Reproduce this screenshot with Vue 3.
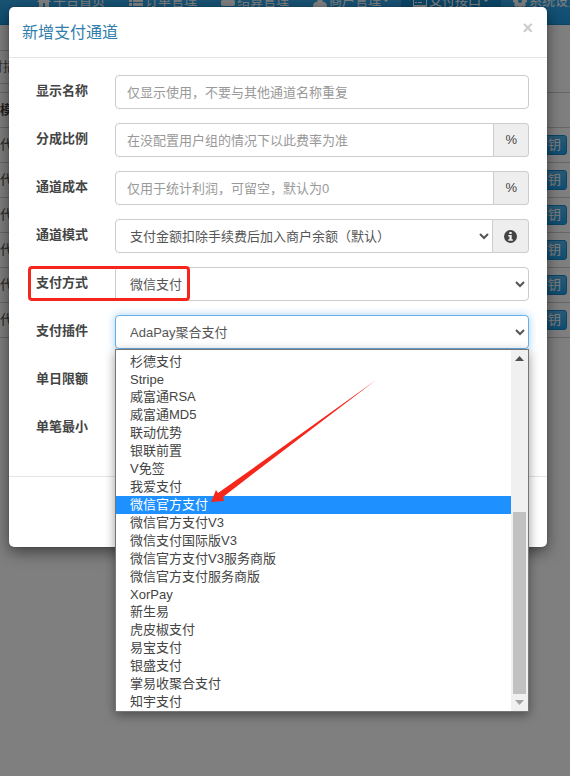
<script setup>
import { reactive } from 'vue';

const form = reactive({
  name: '',
  rate: '',
  cost: '',
  mode: '支付金额扣除手续费后加入商户余额（默认）',
  type: '微信支付',
  plugin: 'AdaPay聚合支付',
})

const active = '微信官方支付'

const plugins = [
  '刷',
  '杉德支付',
  'Stripe',
  '威富通RSA',
  '威富通MD5',
  '联动优势',
  '银联前置',
  'V免签',
  '我爱支付',
  '微信官方支付',
  '微信官方支付V3',
  '微信支付国际版V3',
  '微信官方支付V3服务商版',
  '微信官方支付服务商版',
  'XorPay',
  '新生易',
  '虎皮椒支付',
  '易宝支付',
  '银盛支付',
  '掌易收聚合支付',
  '知宇支付',
]

const isLatin = (text) => /^[a-z]+$/i.test(text)

const nav = [
  { text: '平台首页', icon: 'M7 1L0 8h2v5h4V9h2v4h4V8h2l-2-2V2h-2v2z' },
  { text: '订单管理', icon: 'M0 1h3v3H0zM4 1h10v3H4zM0 5h3v3H0zM4 5h10v3H4zM0 9h3v3H0zM4 9h10v3H4z' },
  { text: '结算管理', icon: 'M3 12a3 3 0 0 1-1-6a4 4 0 0 1 7-3a3 3 0 0 1 3 3a3 3 0 0 1-1 6z' },
  { text: '商户管理', icon: 'M7 0a4 4 0 0 1 2 7l4 2q1 1 1 4H0q0-3 1-4l4-2a4 4 0 0 1 2-7z', caret: true },
  { text: '支付接口', icon: 'M0 1h14v12H0zM1 5v6h12V5zM2 8h2v1H2zM5 8h4v1H5z', caret: true, active: true },
  { text: '系统设置', icon: 'M6 0h2l1 2 2-1 2 2-1 2 2 1v2l-2 1 1 2-2 2-2-1-1 2H6l-1-2-2 1-2-2 1-2-2-1V6l2-1-1-2 2-2 2 1zM7 5a2 2 0 1 0 0 4a2 2 0 0 0 0-4z', caret: true },
]
</script>

<template>
  <div class="page">
    <nav class="navbar">
      <a v-for="item in nav" :key="item.text" href="#" :class="{ active: item.active }">
        <svg width="14" height="13" viewBox="0 0 14 13"><path :d="item.icon" fill="currentColor" fill-rule="evenodd" /></svg>
        <span>{{ item.text }}</span>
        <i v-if="item.caret" class="caret"></i>
      </a>
    </nav>
    <div class="search">付插</div>
    <table class="list">
      <thead>
        <tr><th>模</th><th></th></tr>
      </thead>
      <tbody>
        <tr v-for="n in 6" :key="n">
          <td>代</td>
          <td class="ops"><button type="button">密钥</button></td>
        </tr>
      </tbody>
    </table>

    <div class="backdrop">
      <div class="modal" role="dialog" aria-labelledby="title">
        <div class="modal-header">
          <h4 id="title">新增支付通道</h4>
          <button type="button" class="close" aria-label="关闭">×</button>
        </div>

        <form class="modal-body">
          <div class="row">
            <label for="name">显示名称</label>
            <div class="group">
              <input id="name" v-model="form.name" type="text" placeholder="仅显示使用，不要与其他通道名称重复">
            </div>
          </div>
          <div class="row">
            <label for="rate">分成比例</label>
            <div class="group">
              <input id="rate" v-model="form.rate" type="text" placeholder="在没配置用户组的情况下以此费率为准">
              <span class="addon">%</span>
            </div>
          </div>
          <div class="row">
            <label for="cost">通道成本</label>
            <div class="group">
              <input id="cost" v-model="form.cost" type="text" placeholder="仅用于统计利润，可留空，默认为0">
              <span class="addon">%</span>
            </div>
          </div>
          <div class="row">
            <label for="mode">通道模式</label>
            <div class="group">
              <select id="mode" v-model="form.mode">
                <option>{{ form.mode }}</option>
              </select>
              <span class="addon">
                <svg width="13" height="13" viewBox="0 0 13 13">
                  <circle cx="6.5" cy="6.5" r="6.5" fill="#444" />
                  <path d="M5.300 2h2.400v2H5.300zM4.300 5h3.400v4.200h1.100v1.600H4.300V9.200h1.100V6.600H4.300z" fill="#eee" />
                </svg>
              </span>
            </div>
          </div>
          <div class="row">
            <label for="type">支付方式</label>
            <div class="group">
              <select id="type" v-model="form.type">
                <option>微信支付</option>
              </select>
            </div>
            <div class="mark"></div>
          </div>
          <div class="row">
            <label for="plugin">支付插件</label>
            <div class="group">
              <select id="plugin" v-model="form.plugin" class="focus">
                <option>AdaPay聚合支付</option>
              </select>
              <div class="menu">
                <ul role="listbox">
                  <li
                    v-for="item in plugins"
                    :key="item"
                    role="option"
                    :class="{ selected: item === active, latin: isLatin(item) }"
                  >{{ item }}</li>
                </ul>
                <div class="scrollbar">
                  <svg width="9" height="5" viewBox="0 0 9 5"><path d="M4.500 0L9 5H0z" fill="#505050" /></svg>
                  <div class="track"><div class="thumb"></div></div>
                  <svg width="9" height="5" viewBox="0 0 9 5"><path d="M4.500 5L9 0H0z" fill="#a3a3a3" /></svg>
                </div>
                <svg class="arrow" width="168" height="126" viewBox="0 0 168 126">
                  <path d="M1 122L6 110L8 113L42 89L166 0L48 90L13 117L14 121Z" fill="#f5271c" />
                </svg>
              </div>
            </div>
          </div>
          <div class="row">
            <label for="daymax">单日限额</label>
            <div class="group"><input id="daymax" type="text"></div>
          </div>
          <div class="row">
            <label for="paymin">单笔最小</label>
            <div class="group"><input id="paymin" type="text"></div>
          </div>
        </form>

        <div class="modal-footer"></div>
      </div>
    </div>
  </div>
</template>

<style>
body {
  margin: 0;
  background: #fff;
}
</style>

<style scoped>
* {
  box-sizing: border-box;
}

.page {
  position: relative;
  min-height: 100vh;
  overflow: hidden;
  font-family: "Liberation Sans", "Noto Sans CJK SC", sans-serif;
  font-size: 13px;
  line-height: 18px;
  color: #444;
}

button,
input,
select {
  font: inherit;
  color: inherit;
}

.navbar {
  display: flex;
  height: 50px;
  margin-top: -25px;
  padding-left: 25px;
  background: linear-gradient(#54b4eb, #2fa4e7 60%, #1d9ce5);
  border-bottom: 1px solid #178acc;
}

.navbar a {
  display: flex;
  flex: none;
  align-items: center;
  gap: 2px;
  padding: 2px 12px 0;
  color: #fff;
  text-decoration: none;
}

.navbar a.active {
  background: #178acc;
}

.caret {
  border: 3px solid transparent;
  border-top-color: #fff;
  border-bottom: 0;
}

.search {
  display: flex;
  justify-content: flex-end;
  width: 16px;
  height: 34px;
  margin-top: 25px;
  padding-top: 7px;
  white-space: nowrap;
  border-top: 1px solid #ccc;
  border-bottom: 1px solid #ccc;
  color: #666;
}

.list {
  width: 100%;
  margin-top: 8px;
  border-collapse: collapse;
  border-top: 1px solid #ccc;
}

.list th,
.list td {
  height: 35px;
  padding: 0;
  text-align: left;
  border-bottom: 1px solid #ccc;
}

.list .ops {
  padding-right: 3px;
  text-align: right;
}

.ops button {
  height: 20px;
  padding: 0 5px;
  line-height: 18px;
  color: #fff;
  background: linear-gradient(#54b4eb, #1d9ce5);
  border: 1px solid #178acc;
  border-radius: 3px;
}

.backdrop {
  position: absolute;
  inset: 0;
  padding: 7px 23px 0 9px;
  background: rgba(0, 0, 0, 0.5);
}

.modal {
  background: #fff;
  border-radius: 5px;
  box-shadow: 0 5px 15px rgba(0, 0, 0, 0.5), 0 0 1px rgba(0, 0, 0, 0.6);
}

.modal-header {
  display: flex;
  justify-content: space-between;
  align-items: flex-start;
  padding: 13px 14px 12px 13px;
  border-bottom: 1px solid #e5e5e5;
}

.modal-header h4 {
  margin: 0;
  font-size: 16px;
  font-weight: 400;
  line-height: 25px;
  color: #317eac;
}

.close {
  padding: 0;
  font-size: 18px;
  font-weight: 700;
  line-height: 16px;
  color: #ccc;
  background: none;
  border: 0;
}

.modal-body {
  display: grid;
  gap: 14px;
  padding: 17px 18px 31px;
}

.modal-footer {
  height: 71px;
  border-top: 1px solid #e5e5e5;
}

.row {
  position: relative;
  display: grid;
  grid-template-columns: 61px 1fr;
  column-gap: 27px;
}

.row label {
  padding-top: 7px;
  text-align: right;
  font-weight: 700;
}

.group {
  position: relative;
  display: flex;
  height: 34px;
}

.group input,
.group select {
  flex: 1;
  min-width: 0;
  height: 34px;
  padding: 0 11px;
  color: #555;
  background-color: #fff;
  border: 1px solid #ccc;
  border-radius: 4px;
  outline: 0;
}

.group select {
  padding: 0 4px 0 10px;
}

.group input::placeholder {
  color: #999;
}

.group input:not(:last-child),
.group select:not(:only-child):not(.focus) {
  border-radius: 4px 0 0 4px;
}

.group .focus {
  border-color: #66afe9;
  box-shadow: 0 0 8px rgba(102, 175, 233, 0.6);
}

.addon {
  display: flex;
  align-items: center;
  padding: 0 11px;
  background: #eee;
  border: 1px solid #ccc;
  border-left: 0;
  border-radius: 0 4px 4px 0;
}

.mark {
  position: absolute;
  top: -1px;
  left: 1px;
  width: 162px;
  height: 35px;
  border: 3px solid #f5271c;
  border-radius: 4px;
}

.menu {
  position: absolute;
  z-index: 2;
  top: 34px;
  left: 0;
  right: 0;
  display: flex;
  height: 363px;
  background: #fff;
  border: 1px solid #767676;
  box-shadow: 0 3px 10px rgba(0, 0, 0, 0.4);
}

.menu ul {
  display: flex;
  flex: 1;
  flex-direction: column;
  justify-content: flex-end;
  margin: 0;
  padding: 0;
  overflow: hidden;
  list-style: none;
}

.menu li {
  flex: none;
  padding-left: 14px;
}

.menu .latin {
  line-height: 17px;
}

.menu .selected {
  color: #fff;
  background: #1e90ff;
}

.scrollbar {
  display: flex;
  flex-direction: column;
  align-items: center;
  gap: 6px;
  width: 17px;
  padding: 6px 0;
  background: #f0f0f0;
}

.track {
  display: flex;
  flex: 1;
  align-items: flex-end;
}

.thumb {
  width: 13px;
  height: 182px;
  background: #c1c1c1;
}

.arrow {
  position: absolute;
  top: 30px;
  left: 94px;
}
</style>
